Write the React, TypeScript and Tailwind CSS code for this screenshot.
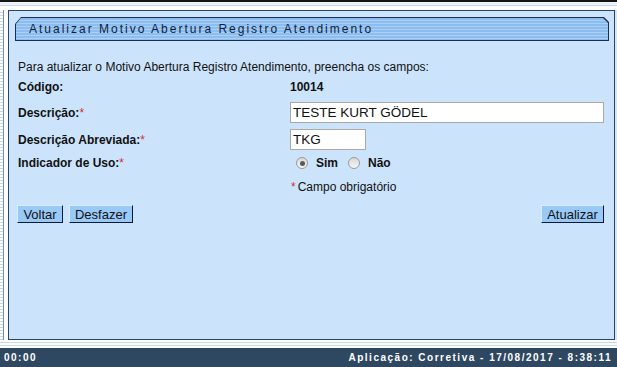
import React from 'react';

const Radio: React.FC<{ checked?: boolean }> = ({ checked }) => (
  <span className="flex h-[12px] w-[12px] items-center justify-center rounded-full border border-[#9a9a9a] bg-[linear-gradient(to_bottom,#d8d8d8,#f6f6f6)]">
    {checked && <span className="h-[5px] w-[5px] rounded-full bg-[#5a5a5a]"></span>}
  </span>
);

const Btn: React.FC<{ label: string; w: string }> = ({ label, w }) => (
  <button className={`flex h-[18px] ${w} items-center justify-center border border-t-[#d8ecff] border-l-[#d8ecff] border-b-[#0a1a3a] border-r-[#0a1a3a] bg-[#99c9f7] text-[13px] leading-none text-[#111]`}>
    {label}
  </button>
);

const Req: React.FC = () => <span className="font-normal text-[#d93030]">*</span>;

const App: React.FC = () => {
  return (
    <div className="relative flex h-[367px] w-[617px] flex-col overflow-hidden bg-white font-['Liberation_Sans',Arial,sans-serif] text-[#111]">
      <div className="h-[2px] bg-[#151515]"></div>
      <div className="h-[3px] bg-[#eef1f5]"></div>
      <div className="h-[1px] bg-[#c3d9ef]"></div>
      <div className="h-[4px] bg-white"></div>

      <div className="flex h-[330px]">
        <div className="w-[3px] bg-[repeating-linear-gradient(to_bottom,#ffffff_0_2px,#c4d9ee_2px_3px)]"></div>
        <div className="w-[1px] bg-[#6f8fb8]"></div>
        <div className="w-[4px] bg-white"></div>

        <div className="flex w-[607px] flex-col border border-[#2d4466] bg-[#cce4fb]">
          <div className="ml-[6px] mt-[6px] h-[24px] w-[594px] bg-[#1c2f52] [clip-path:polygon(0_7px,6px_0,calc(100%_-_5px)_0,100%_5px,100%_100%,0_100%)]">
            <div className="m-[1px] flex h-[22px] w-[592px] items-center bg-[repeating-linear-gradient(to_bottom,#8dbdef_0_2px,#aad0f6_2px_3px)] pl-[13px] text-[12px] tracking-[2px] text-[#0d1f3d] [clip-path:polygon(0_6px,5px_0,calc(100%_-_5px)_0,100%_5px,100%_100%,0_100%)]">
              Atualizar Motivo Abertura Registro Atendimento
            </div>
          </div>

          <div className="flex flex-col pl-[9px] pr-[10px] text-[12px] leading-[14px]">
            <p className="mt-[19px]">Para atualizar o Motivo Abertura Registro Atendimento, preencha os campos:</p>

            <div className="mt-[6px] flex h-[14px] items-center font-bold">
              <span className="w-[272px]">Código:</span>
              <span>10014</span>
            </div>

            <div className="mt-[8px] flex items-center">
              <span className="w-[272px] font-bold">Descrição:<Req /></span>
              <div className="flex h-[21px] w-[314px] items-center border border-[#a9a9a9] bg-white pl-[2px] text-[13.5px]">TESTE KURT GÖDEL</div>
            </div>

            <div className="mt-[6px] flex items-center">
              <span className="w-[272px] font-bold">Descrição Abreviada:<Req /></span>
              <div className="flex h-[21px] w-[76px] items-center border border-[#a9a9a9] bg-white pl-[2px] text-[13.5px]">TKG</div>
            </div>

            <div className="mt-[6px] flex h-[14px] items-center">
              <span className="w-[278px] font-bold">Indicador de Uso:<Req /></span>
              <Radio checked />
              <span className="ml-[8px] font-bold">Sim</span>
              <span className="ml-[10px]"><Radio /></span>
              <span className="ml-[8px] font-bold">Não</span>
            </div>

            <div className="mt-[10px] flex h-[14px] items-center">
              <span className="w-[273px]"></span>
              <Req />
              <span className="ml-[2px]">Campo obrigatório</span>
            </div>

            <div className="mt-[11px] flex items-center">
              <div className="-ml-[1px] flex gap-[6px]">
                <Btn label="Voltar" w="w-[46px]" />
                <Btn label="Desfazer" w="w-[64px]" />
              </div>
              <div className="ml-auto">
                <Btn label="Atualizar" w="w-[63px]" />
              </div>
            </div>
          </div>
        </div>

        <div className="w-[2px] bg-[#d7e6f5]"></div>
      </div>

      <div className="flex h-[8px] flex-col bg-white">
        <div className="mt-[2px] h-[1px] bg-[#c3d9ef]"></div>
        <div className="mt-[2px] h-[1px] bg-[#c3d9ef]"></div>
      </div>

      <div className="flex h-[19px] items-center justify-between bg-[#2f4862] pl-[4px] pr-[5px] text-[10px] font-bold tracking-[1.5px] text-white">
        <span>00:00</span>
        <span>Aplicação: Corretiva - 17/08/2017 - 8:38:11</span>
      </div>
    </div>
  );
};

export default App;
